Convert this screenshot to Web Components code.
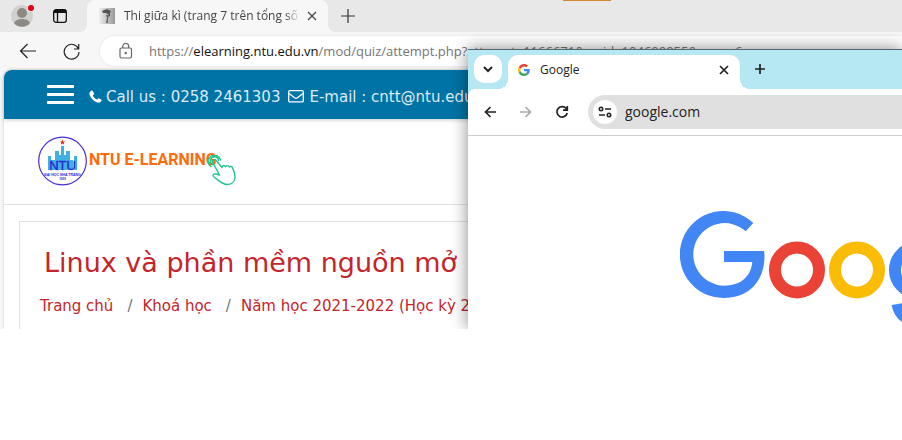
<!DOCTYPE html>
<html lang="vi">
<head>
<meta charset="utf-8">
<title>Desktop</title>
<style>
body{margin:0;background:#fff;font-family:"Open Sans","Noto Sans",sans-serif}
</style>
</head>
<body>
<desktop-stage>
  <edge-window>
    <edge-tabs slot="tabs">Thi giữa kì (trang 7 trên tổng số 30)</edge-tabs>
    <edge-toolbar slot="toolbar"></edge-toolbar>
    <site-header></site-header>
    <site-brand>NTU E-LEARNING</site-brand>
    <course-card>
      <span slot="title">Linux và phần mềm nguồn mở</span>
      <course-crumb>Trang chủ</course-crumb>
      <course-crumb>Khoá học</course-crumb>
      <course-crumb>Năm học 2021-2022 (Học kỳ 2)</course-crumb>
    </course-card>
  </edge-window>
  <chrome-window slot="front">
    <chrome-tabs slot="tabs">Google</chrome-tabs>
    <chrome-toolbar slot="toolbar"></chrome-toolbar>
    <google-logo></google-logo>
  </chrome-window>
</desktop-stage>
<script>
const BASE = `<style>
:host,*{box-sizing:border-box}
button{border:0;padding:0;margin:0;background:none;display:grid;place-items:center;flex:none;color:inherit}
svg{display:block;flex:none}
a{color:inherit;text-decoration:none}
</style>`;
function define(name, html){
  const t = document.createElement('template');
  t.innerHTML = BASE + html;
  customElements.define(name, class extends HTMLElement{
    constructor(){
      super();
      this.attachShadow({mode:'open'}).append(t.content.cloneNode(true));
    }
  });
}

define('desktop-stage', `<style>
:host{display:block;position:relative;overflow:hidden}
</style><slot></slot><slot name="front"></slot>`);

define('edge-window', `<style>
:host{display:block;background:#f7f7f7}
main{margin-left:4px;background:#fff;border-radius:8px 0 0 0;box-shadow:0 0 3px #0003}
</style>
<slot name="tabs"></slot><slot name="toolbar"></slot>
<main><slot></slot></main>`);

define('edge-tabs', `<style>
:host{display:flex;align-items:center;height:32px;background:#e8e8e8;padding-left:11px;position:relative;white-space:nowrap}
.ws{margin-left:18px}
.tab{display:flex;align-items:center;width:241px;height:32px;margin-left:20px;padding:0 9px 0 12px;background:#f7f7f7;border-radius:8px 8px 0 0;position:relative}
.tab::before,.tab::after{content:"";position:absolute;bottom:0;width:8px;height:8px}
.tab::before{left:-8px;background:radial-gradient(circle at 0 0,#e8e8e8 8px,#f7f7f7 8px)}
.tab::after{right:-8px;background:radial-gradient(circle at 100% 0,#e8e8e8 8px,#f7f7f7 8px)}
.title{flex:1;min-width:0;overflow:hidden;margin:0 5px 0 9px;font-size:12px;line-height:16px;color:#444;-webkit-mask-image:linear-gradient(90deg,#000 92%,transparent)}
.new{margin-left:12px}
.accent{position:absolute;left:563px;top:0;width:48px;height:1px;background:#d08a2c}
</style>
<button aria-label="Profile"><svg width="24" height="24" viewBox="0 0 24 24"><circle cx="11" cy="12" r="11" fill="#d2d0ce"/><circle cx="11" cy="9" r="5" fill="#8d8a86"/><path d="M3 19c2-5.500 14-5.500 16 0-3.500 5-12.500 5-16 0z" fill="#8d8a86"/><circle cx="20" cy="4" r="4" fill="#e8e8e8"/><circle cx="20" cy="4" r="3" fill="#e3000f"/></svg></button>
<button class="ws" aria-label="Workspaces"><svg width="14" height="14" viewBox="0 0 14 14" fill="none" stroke="#111"><rect x=".7" y=".7" width="12.600" height="12.600" rx="2.200" stroke-width="1.300"/><path d="M1 2.500h12" stroke-width="3"/><path d="M4.500 3v10" stroke-width="1.300"/></svg></button>
<div class="tab">
<svg width="16" height="16" viewBox="0 0 16 16"><defs><linearGradient id="f"><stop offset="0" stop-color="#eee"/><stop offset="1" stop-color="#999"/></linearGradient></defs><path fill="url(#f)" d="M0 0h16v16H0z"/><path d="M3 3l5-2 4 2-1 2-1 2-3-2-3 0z" fill="#555"/><path d="M7 7l3 0-1 4v4H7l1-5z" fill="#666"/><path d="M10 5l1 2-1 2z" fill="#333"/></svg>
<span class="title"><slot></slot></span>
<button aria-label="Close tab"><svg width="14" height="14" viewBox="0 0 14 14" stroke="#444" stroke-width="1.200"><path d="M3 3l8 8M11 3l-8 8"/></svg></button>
</div>
<button class="new" aria-label="New tab"><svg width="16" height="16" viewBox="0 0 16 16" stroke="#333" stroke-width="1.200"><path d="M1 8h14M8 1v14"/></svg></button>
<span class="accent"></span>`);

define('edge-toolbar', `<style>
:host{display:flex;align-items:center;height:38px;padding:0 0 0 19px;background:#f7f7f7}
.reload{margin-left:26px}
.bar{flex:1;min-width:0;display:flex;align-items:center;height:30px;margin-left:20px;padding-left:19px;background:#fff;border-radius:15px 0 0 15px;box-shadow:0 0 3px #0000001a}
.url{margin-left:16px;font-size:13px;line-height:20px;color:#767676;white-space:nowrap;overflow:hidden}
b{font-weight:400;color:#111}
</style>
<button aria-label="Back"><svg width="18" height="16" viewBox="0 0 18 16" fill="none" stroke="#222" stroke-width="1.200"><path d="M17 8H2M8.500 1L1.500 8l7 7"/></svg></button>
<button class="reload" aria-label="Reload"><svg width="17" height="17" viewBox="0 0 17 17" fill="none" stroke="#222" stroke-width="1.200"><path d="M15.500 6A7.400 7.400 0 1 0 16 9M15.700 1v5H11"/></svg></button>
<div class="bar">
<svg width="14" height="16" viewBox="0 0 14 16" fill="none" stroke="#666" stroke-width="1.200"><rect x="1" y="5" width="11.500" height="10" rx="1.500"/><path d="M3.700 5V3.500a3 3 0 0 1 6 0V5"/><circle cx="6.700" cy="10" r=".6" fill="#444"/></svg>
<a class="url" href="#">https://<b>elearning.ntu.edu.vn</b>/mod/quiz/attempt.php?attempt=1166671&amp;cmid=104609955&amp;page=6</a>
</div>`);

define('site-header', `<style>
:host{display:flex;align-items:center;height:49px;padding:4px 0 0 43px;background:#0073a6;color:#dcebf2;border-radius:8px 0 0 0;font:15px/24px "DejaVu Sans",Verdana,sans-serif;white-space:nowrap;box-shadow:0 1px 4px #0003;position:relative}
.menu{margin:-4px 15px 0 0}
.phone{margin-right:4px}
.mail{margin:0 5px 0 8px}
</style>
<button class="menu" aria-label="Menu"><svg width="27" height="19" viewBox="0 0 27 19" fill="#fff"><path d="M0 0h27v3H0zM0 8h27v3H0zM0 16h27v3H0z"/></svg></button>
<svg class="phone" width="13" height="13" viewBox="0 0 13 13" fill="#fff"><path d="M3.200.4C2 .5.500 1.700.4 3.300c0 1.700 1.200 4.200 3.100 6.100s4.500 3.200 6.200 3.200c1.600 0 2.800-1.500 2.900-2.700 0-.4-2.800-1.900-3.200-1.700-.5.200-1 1.300-1.500 1.400-.8 0-3.900-3-4-4 0-.5 1.200-1 1.300-1.500C5.300 3.600 3.800.400 3.200.400z"/></svg>
<span>Call us : 0258 2461303</span>
<svg class="mail" width="16" height="13" viewBox="0 0 16 13" fill="none" stroke="#fff" stroke-width="1.300"><rect x=".7" y=".7" width="14.600" height="11.200" rx="1.200"/><path d="M1 3.500c2 1.500 4 3 5.500 4.200q1.500 1 3 0C11 6.500 13 5 15 3.500"/></svg>
<span>E-mail : cntt@ntu.edu.vn</span>`);

define('site-brand', `<style>
:host{display:block;border-bottom:1px solid #dee2e6;padding:17px 0 17px 34px}
a{display:flex;align-items:flex-start;width:max-content;color:#ff6a0a;font:bold 16px/20px Roboto,"Liberation Sans",sans-serif}
span{padding:14px 0 0 2px}
.hand{margin:19px 0 0 -10px}
</style>
<a href="#"><svg width="49" height="50" viewBox="0 0 49 50"><circle cx="24.500" cy="25" r="23.800" fill="#fff" stroke="#4a2fd6" stroke-width="1.200"/><path fill="#3fb0e0" d="M10 20h3v14h-3zM13 24h4v10h-4zM17 15h4v19h-4zM21 19h2v15h-2zM23 10h3v24h-3zM26 19h2v15h-2zM28 15h4v19h-4zM32 24h3v10h-3zM36 20h3v14h-3z"/><path fill="#e0281e" d="M24.500 3.500l.7 2h2l-1.500 1.200.5 2-1.700-1.200-1.700 1.200.5-2-1.500-1.200h2z"/><g font-family="Liberation Sans" fill="#2f28d8" font-weight="bold" text-anchor="middle"><text x="24.500" y="34" font-size="13" font-weight="400" stroke="#2f28d8" stroke-width=".4">NTU</text><text x="24.500" y="39.500" font-size="3.500">ĐẠI HỌC NHA TRANG</text><text x="24.500" y="44" font-size="3">1959</text></g></svg>
<span><slot></slot></span>
<svg class="hand" width="30" height="32" viewBox="0 0 30 32" fill="none" stroke="#1dc48c" stroke-width="1.400" stroke-linecap="round" stroke-linejoin="round"><path d="M4 11.500A6.200 6.200 0 1 1 13.500 5M6 9.500a4 4 0 1 1 5.500-4"/><path d="M6.200 5.200c1.200-1 2.300-.7 3.200.5l5.600 6.800c0-2 2.500-2.500 3.500-.8.500-1.500 3-1.500 3.800.300 1-1.200 3-.5 3.300 1 1.500 4 2.800 7 2.400 10-.6 4.500-4.500 6.500-8 6.500-5 0-8-4-13-7.500-2-2-.5-3.500 2-3l3.500 1L6.300 8.500C5.300 7.300 5.300 6 6.200 5.200z"/></svg></a>`);

define('course-card', `<style>
:host{display:block;margin:0;padding:16px 0 0 15px;white-space:nowrap;font-family:"DejaVu Sans",Verdana,sans-serif;color:#c4242a}
section{border:1px solid #dee2e6;border-width:1px 0 0 1px;padding:21px 0 11px 20px}
h1{margin:0;padding-left:4px;font-size:27px;line-height:40px;font-weight:400}
nav{display:flex;margin-top:11px}
</style>
<section><h1><slot name="title"></slot></h1><nav aria-label="Breadcrumb"><slot></slot></nav></section>`);

define('course-crumb', `<style>
:host{display:flex;font-size:15px;line-height:24px}
:host(:not(:last-child))::after{content:"/";color:#6c757d;padding:0 10px 0 14px}
</style><a href="#"><slot></slot></a>`);

define('chrome-window', `<style>
:host{display:block;position:absolute;left:468px;right:0;top:49px;bottom:0;background:#fff;overflow:visible;box-shadow:0 0 16px #0007}
</style>
<slot name="tabs"></slot><slot name="toolbar"></slot><slot></slot>`);

define('chrome-tabs', `<style>
:host{display:flex;align-items:flex-start;height:40px;padding:5px 0 0 6px;background:#b5e8f2;border-top:1px solid #52686e}
.list{width:28px;height:28px;border-radius:10px;background:#fff}
.tab{display:flex;align-items:center;width:232px;height:34px;margin-left:6px;padding:0 10px 5px;background:#fff;border-radius:10px 10px 0 0;position:relative;font-size:12px;line-height:16px;color:#222}
.tab::before,.tab::after{content:"";position:absolute;bottom:0;width:10px;height:10px}
.tab::before{left:-10px;background:radial-gradient(circle at 0 0,#b5e8f2 10px,#fff 10px)}
.tab::after{right:-10px;background:radial-gradient(circle at 100% 0,#b5e8f2 10px,#fff 10px)}
.list{position:relative;z-index:1}
.tab span{flex:1;margin-left:10px}
.new{width:20px;height:28px;margin-left:10px}
</style>
<button class="list" aria-label="Search tabs"><svg width="10" height="8" viewBox="0 0 10 8" fill="none" stroke="#222" stroke-width="2"><path d="M1 2l4 4 4-4"/></svg></button>
<div class="tab"><svg width="12" height="12" viewBox="0 0 48 48"><path fill="#ea4335" d="M24 9.500c3.540 0 6.710 1.220 9.210 3.600l6.850-6.850C35.900 2.380 30.470 0 24 0 14.620 0 6.510 5.380 2.560 13.220l7.980 6.190C12.430 13.720 17.740 9.500 24 9.500z"/><path fill="#4285f4" d="M46.980 24.550c0-1.570-.15-3.090-.38-4.550H24v9.020h12.940c-.58 2.960-2.260 5.480-4.780 7.180l7.730 6c4.510-4.180 7.090-10.360 7.090-17.650z"/><path fill="#fbbc05" d="M10.530 28.590A14.500 14.500 0 0 1 9.770 24c0-1.600.27-3.140.76-4.590l-7.980-6.190A23.900 23.900 0 0 0 0 24c0 3.880.92 7.540 2.560 10.780z"/><path fill="#34a853" d="M24 48c6.480 0 11.930-2.130 15.890-5.810l-7.730-6c-2.150 1.450-4.920 2.300-8.160 2.300-6.260 0-11.570-4.220-13.470-9.910l-7.980 6.190C6.510 42.620 14.620 48 24 48z"/></svg>
<span><slot></slot></span>
<button aria-label="Close tab"><svg width="12" height="12" viewBox="0 0 12 12" stroke="#222" stroke-width="1.700"><path d="M2 2l8 8M10 2l-8 8"/></svg></button></div>
<button class="new" aria-label="New tab"><svg width="12" height="12" viewBox="0 0 12 12" stroke="#222" stroke-width="1.700"><path d="M1 6h10M6 1v10"/></svg></button>`);

define('chrome-toolbar', `<style>
:host{display:flex;align-items:center;height:47px;padding-left:16px;border-bottom:1px solid #ccc;background:#fff;position:relative;color:#222}
:host::before{content:"";position:absolute;left:0;top:0;width:8px;height:8px;background:radial-gradient(circle at 100% 100%,transparent 8px,#b5e8f2 8px)}
.fwd{color:#aaa;margin-left:24px}
.reload{margin-left:23px}
.bar{flex:1;min-width:0;display:flex;align-items:center;height:34px;margin-left:19px;padding-left:5px;background:#e0e0e0;border-radius:17px 0 0 17px}
.info{width:24px;height:24px;border-radius:12px;background:#fff}
input{flex:1;min-width:0;border:0;background:none;padding:0;margin-left:8px;font:14px/20px "Open Sans","Noto Sans",sans-serif;color:#222}
</style>
<button aria-label="Back"><svg width="12" height="12" viewBox="0 0 12 12" fill="none" stroke="currentColor" stroke-width="1.700"><path d="M12 6H1.500M6.500 1l-5 5 5 5"/></svg></button>
<button class="fwd" aria-label="Forward"><svg width="12" height="12" viewBox="0 0 12 12" fill="none" stroke="currentColor" stroke-width="1.700"><path d="M0 6h10.500M5.500 1l5 5-5 5"/></svg></button>
<button class="reload" aria-label="Reload"><svg width="14" height="14" viewBox="0 0 14 14" fill="none" stroke="currentColor" stroke-width="1.700"><path d="M11.500 4A5.200 5.200 0 1 0 12.200 8M12.300 1v4.200H8"/></svg></button>
<div class="bar"><button class="info" aria-label="Site information"><svg width="14" height="12" viewBox="0 0 14 12" fill="none" stroke="#222" stroke-width="1.600"><circle cx="3" cy="3" r="1.700"/><path d="M7 3h6M1 9h6"/><circle cx="11" cy="9" r="1.700"/></svg></button>
<input aria-label="Address" value="google.com"></div>`);

define('google-logo', `<style>
:host{display:block;overflow:hidden;padding:75px 0 0 212px}
</style>
<svg width="272" height="116" viewBox="0 0 272 116" role="img" aria-label="Google" fill="none" stroke-width="12"><path fill="#4285f4" d="M73.300 12A43.500 43.500 0 1 0 44 87C69 87 84.500 70 84.500 45q0-3-.5-5H44v11h28.300C71 66 60 74.700 44 74.700A31.300 31.300 0 1 1 65.700 20.300z"/><ellipse cx="117" cy="59" rx="22" ry="22.500" stroke="#ea4335"/><ellipse cx="177" cy="59" rx="22" ry="22.500" stroke="#fbbc05"/><ellipse cx="237" cy="59" rx="22" ry="22.500" stroke="#4285f4"/><path stroke="#4285f4" d="M217.500 93a21 21 0 0 0 41.500-7V33"/></svg>`);
</script>
</body>
</html>
